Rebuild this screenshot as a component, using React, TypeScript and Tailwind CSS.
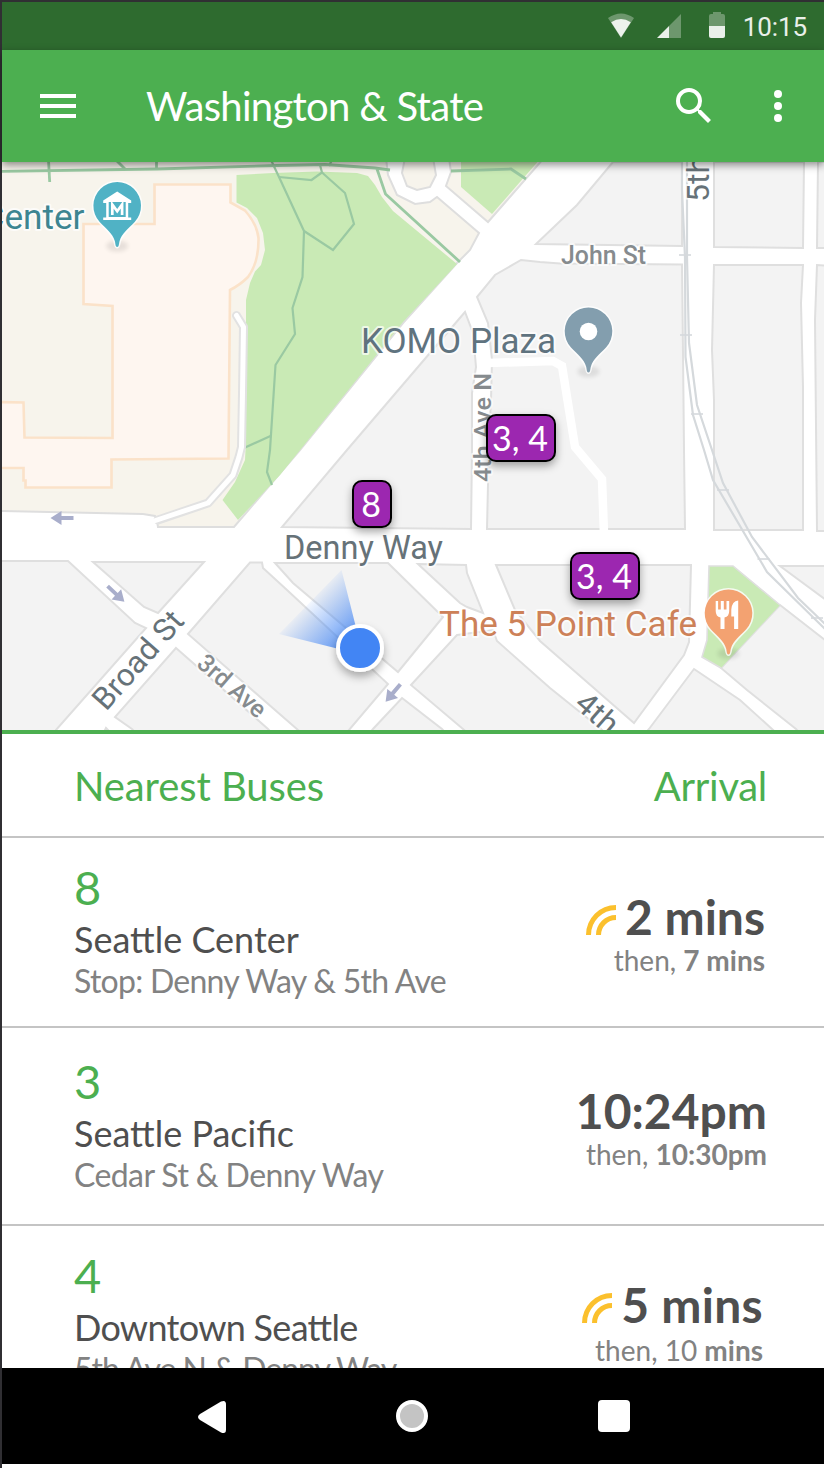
import React from "react";

const BLOCKS = [
  "613,162 577,205 536,244 682,246 682,162",
  "714,162 714,247 803,248 804,162",
  "818,162 817,248 830,248 830,162",
  "540,262 521,260 495,275 477,297 488,323 492,360 491,400 489,440 487,529 685,529 684,450 683,353 682,264.5 560,263.5",
  "465,312 347,450 282,527 471,529 472,450 472,393 476,367 473,333",
  "714,265 803,265 801,303 803,387 803,530 714,530 714,400 712,350",
  "817,265 815,320 817,531 830,531 830,266",
  "-4,561 68,561 135,623 146,628 56,730 56,740 -4,740",
  "93,562 204,562 158,613 144,607",
  "250,562.5 262,562.5 263,568 287,590 388,684 349,730 340,740 310,740 298,730 188,634",
  "176,648 268,729 278,740 142,740 132,729 115,717",
  "275,563 388,563 443,617 398,672 293,583",
  "418,564 466,565 467,573 483,613 467,607 460,603",
  "496,565 691,565 689,642 684,655 634,723 540,641 515,610",
  "457,635 493,630 497,641 550,688 601,729 612,740 475,740 463,729 411,685",
  "402,698 442,729 452,740 364,740 373,729",
  "780,605 830,644 830,740 806,740 796,729 747,690 721,668",
  "694,669 740,700 772,729 784,740 640,740 649,729",
  "780,566 830,566 830,603",
  "106,728 100,740 118,740",
];

const PATHS = [
  "M-2 171.5 L157 169 L277 165.5 L325 164.5 L375 168 L390 170",
  "M48.5 160 L49.7 182",
  "M116 160 L125 169",
  "M156.5 160 V169",
  "M377 169 L385.5 194 L460 262",
  "M451 171 L511 169 L526 179",
];

const THIN_PATHS = [
  "M271 160 L279 177 L304 231 L302.5 277 L292.5 308 L295 334 L275.5 365 L270 450 L267 472 L272 485",
  "M270.5 436 L244 448",
  "M279 177 L311.5 180 L322 172.5 L320 165",
  "M322 172.5 L345 193 L354 224 L333 250 L304 231",
  "M332 160 L329 166",
];

const RAILS = [
  "M682 160 L682 190 L685 257 L685.5 357 L693 415 L704 450 L713 480 L767 572 L826 630",
  "M687 160 V257 L689 343 L697 405 L712 450 L723 483 L752 537 L798 598 L826 625",
];

const TICKS = [
  [685, 255],
  [686, 335],
  [697, 414],
  [723, 490],
  [763.5, 559],
  [817, 618],
];

function Pin({ x, y, color, children }: { x: number; y: number; color: string; children: React.ReactNode }) {
  return (
    <g transform={`translate(${x} ${y})`}>
      <ellipse cx="0" cy="40" rx="11" ry="5.5" fill="#000" opacity="0.09" filter="url(#soft)" />
      <path
        d="M0 41 C-1.8 41 -1.6 38 -2.4 35 C-4.6 27.5 -11 23 -17.5 16 A23.8 23.8 0 1 1 17.5 16 C11 23 4.6 27.5 2.4 35 C1.6 38 1.8 41 0 41 Z"
        fill={color}
        stroke="#fff"
        strokeOpacity="0.8"
        strokeWidth="3"
        paintOrder="stroke"
      />
      {children}
    </g>
  );
}

function Arrow({ x, y, angle }: { x: number; y: number; angle: number }) {
  return (
    <path
      transform={`translate(${x} ${y}) rotate(${angle})`}
      d="M11.5 0 L0.5 -7 V-2 H-11.5 V2 H0.5 V7 Z"
      fill="#a9aecb"
    />
  );
}

type LabelProps = {
  x: number;
  y: number;
  size: number;
  width: number;
  color: string;
  angle?: number;
  weight?: number;
  children: string;
};

function Label({ x, y, size, width, color, angle = 0, weight = 400, children }: LabelProps) {
  return (
    <text
      transform={`translate(${x} ${y}) rotate(${angle})`}
      fontSize={size}
      fontWeight={weight}
      textLength={width}
      lengthAdjust="spacingAndGlyphs"
      fill={color}
      stroke="#fff"
      strokeOpacity="0.7"
      strokeWidth="4"
      strokeLinejoin="round"
      paintOrder="stroke"
      fontFamily="Roboto, sans-serif"
    >
      {children}
    </text>
  );
}

function CityMap() {
  return (
    <svg viewBox="2 162 822 568" width="822" height="568" className="block">
      <defs>
        <filter id="soft" x="-50%" y="-50%" width="200%" height="200%">
          <feGaussianBlur stdDeviation="2" />
        </filter>
        <filter id="drop" x="-50%" y="-50%" width="200%" height="200%">
          <feDropShadow dx="0" dy="5" stdDeviation="4" floodColor="#000" floodOpacity="0.3" />
        </filter>
        <linearGradient id="beam" gradientUnits="userSpaceOnUse" x1="352" y1="642" x2="307" y2="599">
          <stop offset="0" stopColor="#4285f4" stopOpacity="0.85" />
          <stop offset="1" stopColor="#4285f4" stopOpacity="0" />
        </linearGradient>
      </defs>
      <rect x="0" y="160" width="826" height="572" fill="#fff" />

      <g fill="#f7f4ec" stroke="#dedede" strokeWidth="2">
        <path d="M-4 158 H386 L388 175 L397 195 L415 204 L430 202 L437 197 L479 233 L470 250 L457 263 L403 323 L300 450 L234 527 H158 L157 521 L155 516 L143 514 L-4 511 Z" />
        <path d="M449 158 L451 172 L446 186 L488 222 L544 158 Z" />
        <path d="M405 158 L402 173 L407 186 L417 190 L430 187 L436 175 L433 158 Z" />
      </g>
      <g fill="#c9eab5">
        <path d="M236.5 175 L273 173 L317 171.5 L357 173 L368 176 L375 185 L382 197 L393 211 L457 264 L403 322 L280 475 L238 520 L222.5 500 L235 482 L245 460 L246 440 V300 L250 283 L255 271.5 L261 265 L265 250 L263 233 L257 218 L247 208 L236.5 202.5 Z" />
        <path d="M461 158 V187 L492 214 L541 158 Z" />
      </g>

      <path
        d="M154.5 184.5 H230.5 V202.5 L245 210.5 Q257 224 258.5 238 Q259 262 248 277 Q240 285 230 290 L228.5 458.5 L111.5 459.5 V487.5 H25.5 V480.5 H23.5 V468 H-4 V402 L23.5 402.5 L24.5 437.5 L112.5 438 V306 L83.5 304 V224 H154.5 Z"
        fill="#fef6f0"
        stroke="#fbe2c9"
        strokeWidth="2.6"
      />

      <g fill="none" stroke="#9ac9a2">
        <g strokeWidth="2.8">{PATHS.map((d) => <path key={d} d={d} />)}</g>
        <g strokeWidth="2.2">{THIN_PATHS.map((d) => <path key={d} d={d} />)}</g>
      </g>

      <g fill="none" strokeLinejoin="round" strokeLinecap="round">
        <path d="M236.5 315.5 L243.5 327 L242.5 393 L241.5 447 L239 457 L233 475 L208 503 L158 520" stroke="#e2e2e2" strokeWidth="9" />
        <path d="M236.5 315.5 L243.5 327 L242.5 393 L241.5 447 L239 457 L233 475 L208 503 L154 521" stroke="#fff" strokeWidth="5" />
      </g>

      <g fill="#f3f3f3" stroke="#dfdfdf" strokeWidth="2">
        {BLOCKS.map((p) => <polygon key={p} points={p} />)}
      </g>
      <path d="M488 363 L553 361 L562 366 L575 447 L602 479 L604 534" fill="none" stroke="#fff" strokeWidth="8.5" />
      <path d="M709 566 H733 L780 605 L721 668 L702 657 L707 640 Z" fill="#c9eab5" />
      <path d="M721 668 L702 657 L707 640 L709 566 H733 L780 605" fill="none" stroke="#dfdfdf" strokeWidth="1.6" />

      <g fill="none" stroke="#d5d9dc" strokeWidth="2.2">
        {RAILS.map((d) => <path key={d} d={d} />)}
        {TICKS.map(([x, y]) => (
          <path key={y} d={`M${x - 6} ${y} h12`} strokeWidth="1.6" />
        ))}
      </g>

      <Arrow x={62} y={518} angle={180} />
      <Arrow x={116} y={594} angle={43} />
      <Arrow x={393} y={693} angle={130} />

      <Label x={-18.5} y={229} size={35} width={103} color="#3d8591">Center</Label>
      <Label x={361} y={353} size={35.5} width={195} color="#5f737f">KOMO Plaza</Label>
      <Label x={561} y={263.5} size={25} width={85} color="#868b8e" weight={500}>John St</Label>
      <Label x={709} y={202} size={32} width={46} color="#667278" angle={-90}>5th</Label>
      <Label x={491} y={482} size={24.5} width={109} color="#868b8e" weight={500} angle={-90}>4th Ave N</Label>
      <Label x={284} y={558.5} size={33.5} width={159} color="#667278">Denny Way</Label>
      <Label x={106} y={712} size={31} width={120} color="#667278" angle={-48.5}>Broad St</Label>
      <Label x={195.5} y={665.5} size={25} width={82} color="#868b8e" weight={500} angle={41}>3rd Ave</Label>
      <Label x={439} y={636} size={35.5} width={258} color="#cd8158">The 5 Point Cafe</Label>
      <Label x={573} y={706} size={31} width={46} color="#667278" angle={41}>4th</Label>

      <Pin x={117.2} y={206} color="#50b2c5">
        <path d="M0 -14.5 L14 -5.5 V-3 H11 V11.5 H14 V14 H-14 V11.5 H-11 V-3 H-14 V-5.5 Z M-8.5 -4 V11 H8.5 V-4 Z" fill="#fff" fillRule="evenodd" />
        <path d="M-4.9 9 V-1.5 L0 5.2 L4.9 -1.5 V9" fill="none" stroke="#fff" strokeWidth="2.7" />
      </Pin>
      <Pin x={588.5} y={331.5} color="#839eae">
        <circle r="8.8" fill="#fff" />
      </Pin>
      <Pin x={728.5} y={613.5} color="#f3a271">
        <path d="M-12.8 -12.5 H-10.4 V-4 H-7.7 V-12.5 H-4.7 V-4 H-2 V-12.5 H0.7 V-2.5 Q0.7 3 -4 4 V15.5 H-8 V4 Q-12.8 3 -12.8 -2.5 Z" fill="#fff" />
        <path d="M9.7 -13 V15.5 H5.6 V3 H2.8 V-4 Q3.5 -12.5 9.7 -13 Z" fill="#fff" />
      </Pin>

      <path d="M363 655 L341.5 570 L279 634 Z" fill="url(#beam)" />
      <circle cx="360" cy="648" r="22" fill="#4285f4" stroke="#fff" strokeWidth="4" filter="url(#drop)" />
    </svg>
  );
}

function StopBadge({ className, children }: { className: string; children: string }) {
  return (
    <div
      className={`absolute flex h-12 items-center justify-center rounded-[10px] border-2 border-black bg-[#9c27b0] pr-0.5 pb-px text-[34px] leading-none whitespace-nowrap text-white shadow-[0_4px_8px_rgba(0,0,0,0.35)] ${className}`}
    >
      {children}
    </div>
  );
}

function StatusBar() {
  return (
    <div className="flex h-12 items-center justify-end bg-[#2e6b2f] pr-[17px]">
      <svg width="26" height="26" viewBox="0 0 26 26" className="mr-[23px] fill-white">
        <path d="M0 5.5 Q13 -3.5 26 5.5 L13 25.5 Z" opacity="0.3" transform="translate(0 -0.5)" />
        <path d="M3.2 9.3 Q13 2.9 22.8 9.3 L13 24.5 Z" opacity="0.87" />
      </svg>
      <svg width="24" height="24" viewBox="0 0 24 24" className="mr-[28px] fill-white">
        <path d="M12 12 L24 0 V24 H12 Z" opacity="0.3" />
        <path d="M0 24 L12 12 V24 Z" opacity="0.9" />
      </svg>
      <svg width="16" height="26" viewBox="0 0 16 26" className="mr-[18px] mb-0.5 fill-white">
        <path d="M4 0 H12 V2 H14 Q16 2 16 4 V14 H0 V4 Q0 2 2 2 H4 Z" opacity="0.3" />
        <path d="M0 14 H16 V24 Q16 26 14 26 H2 Q0 26 0 24 Z" opacity="0.9" />
      </svg>
      <span className="pt-0.5 font-[Roboto] text-[26px] leading-none tracking-[-0.1px] text-white/90">10:15</span>
    </div>
  );
}

function AppBar() {
  return (
    <header className="relative z-10 flex h-28 items-center bg-[#4caf50] pr-[22px] pl-[38px] text-white shadow-[0_3px_8px_rgba(0,0,0,0.45)]">
      <div className="flex w-9 flex-col gap-1.5">
        <div className="h-1 bg-white" />
        <div className="h-1 bg-white" />
        <div className="h-1 bg-white" />
      </div>
      <h1 className="ml-[70px] flex-1 pb-px text-[40px] leading-none tracking-[-0.7px]">Washington &amp; State</h1>
      <svg width="48" height="48" viewBox="0 0 24 24" className="mr-9 fill-white">
        <path d="M15.5 14h-.79l-.28-.27A6.471 6.471 0 0 0 16 9.5 6.5 6.5 0 1 0 9.5 16c1.61 0 3.09-.59 4.23-1.57l.27.28v.79l5 4.99L20.49 19l-4.99-5zm-6 0C7.01 14 5 11.99 5 9.5S7.01 5 9.5 5 14 7.01 14 9.5 11.99 14 9.5 14z" />
      </svg>
      <svg width="48" height="48" viewBox="0 0 24 24" className="fill-white">
        <circle cx="12" cy="6" r="2" />
        <circle cx="12" cy="12" r="2" />
        <circle cx="12" cy="18" r="2" />
      </svg>
    </header>
  );
}

function LiveIcon() {
  return (
    <svg width="30" height="30" viewBox="0 0 30 30" fill="none" stroke="#fbc02d" strokeWidth="5" className="mr-[9px] mb-[6px]">
      <path d="M2.5 30 A27.5 27.5 0 0 1 30 2.5" />
      <path d="M12.5 30 A17.5 17.5 0 0 1 30 12.5" />
    </svg>
  );
}

type BusRowProps = {
  route: string;
  name: string;
  nameClass?: string;
  stop: string;
  stopClass: string;
  arrival: string;
  arrivalClass?: string;
  live?: boolean;
  next: React.ReactNode;
  nextClass?: string;
  rowClass: string;
  leftClass: string;
  rightClass: string;
};

function BusRow(p: BusRowProps) {
  return (
    <li className={`flex shrink-0 justify-between border-b-2 border-[#c4c4c4] pl-[72px] whitespace-nowrap ${p.rowClass}`}>
      <div className={p.leftClass}>
        <div className="text-[47px] leading-[60px] text-[#4caf50]">{p.route}</div>
        <div className={`text-[36px] leading-[44px] text-[#4f4f4f] ${p.nameClass ?? ""}`}>{p.name}</div>
        <div className={`text-[32px] leading-[40px] text-[#828282] ${p.stopClass}`}>{p.stop}</div>
      </div>
      <div className={`flex flex-col items-end ${p.rightClass}`}>
        <div className="flex items-end">
          {p.live && <LiveIcon />}
          <span className={`text-[48px] leading-[48px] font-bold text-[#4f4f4f] ${p.arrivalClass ?? ""}`}>{p.arrival}</span>
        </div>
        <div className={`text-[28px] leading-[38px] text-[#828282] ${p.nextClass ?? ""}`}>{p.next}</div>
      </div>
    </li>
  );
}

export default function App() {
  return (
    <div className="h-[1468px] w-[824px] overflow-hidden bg-[#302f33] pt-0.5 pl-0.5 font-[Lato,sans-serif]">
      <div className="flex h-[1466px] flex-col bg-white">
        <StatusBar />
        <AppBar />
        <div className="relative h-[572px] shrink-0 overflow-hidden border-b-4 border-[#4caf50]">
          <CityMap />
          <StopBadge className="top-[252px] left-[484px] w-[70px]">3, 4</StopBadge>
          <StopBadge className="top-[318px] left-[350px] w-10">8</StopBadge>
          <StopBadge className="top-[390px] left-[568px] w-[70px]">3, 4</StopBadge>
        </div>

        <div className="flex h-[104px] shrink-0 items-center justify-between border-b-2 border-[#c4c4c4] pt-0.5 pr-[57px] pl-[72px] text-[40px] leading-none text-[#4caf50]">
          <span className="tracking-[-0.1px]">Nearest Buses</span>
          <span className="tracking-[-0.3px]">Arrival</span>
        </div>

        <ul className="flex min-h-0 flex-1 flex-col overflow-hidden">
          <BusRow
            route="8"
            name="Seattle Center"
            stop="Stop: Denny Way & 5th Ave"
            stopClass="tracking-[-0.73px]"
            arrival="2 mins"
            live
            next={<>then, <b>7 mins</b></>}
            rowClass="h-[190px]"
            leftClass="pt-[19px]"
            rightClass="pt-[55px] pr-[59px]"
          />
          <BusRow
            route="3"
            name="Seattle Pacific"
            stop="Cedar St & Denny Way"
            stopClass="tracking-[-0.6px]"
            arrival="10:24pm"
            next={<>then, <b>10:30pm</b></>}
            rowClass="h-[198px]"
            leftClass="pt-[23px]"
            rightClass="pt-[59px] pr-[57px]"
          />
          <BusRow
            route="4"
            name="Downtown Seattle"
            nameClass="tracking-[-0.7px] [font-feature-settings:'liga'_1]"
            stop="5th Ave N & Denny Way"
            stopClass="tracking-[-1px]"
            arrival="5 mins"
            arrivalClass="tracking-[0.3px]"
            live
            next={<>then, 10 <b>mins</b></>}
            nextClass="mt-[2px]"
            rowClass="h-[198px]"
            leftClass="pt-[19px]"
            rightClass="pt-[55px] pr-[61px]"
          />
        </ul>

        <nav className="h-24 shrink-0 bg-black">
          <div className="flex h-full items-center pl-[196px]">
            <svg width="28" height="34" viewBox="0 0 28 34" className="mt-0.5 fill-white">
              <path d="M28 4.5 V29.5 Q28 34.5 23 32.4 L2 20 Q-2 17 2 14 L23 1.6 Q28 -0.5 28 4.5 Z" />
            </svg>
            <div className="ml-[170px] size-8 rounded-full border-4 border-white bg-[#c4c4c4]" />
            <div className="ml-[170px] size-8 rounded-[4px] bg-white" />
          </div>
        </nav>
        <div className="h-1 shrink-0 bg-white" />
      </div>
    </div>
  );
}
